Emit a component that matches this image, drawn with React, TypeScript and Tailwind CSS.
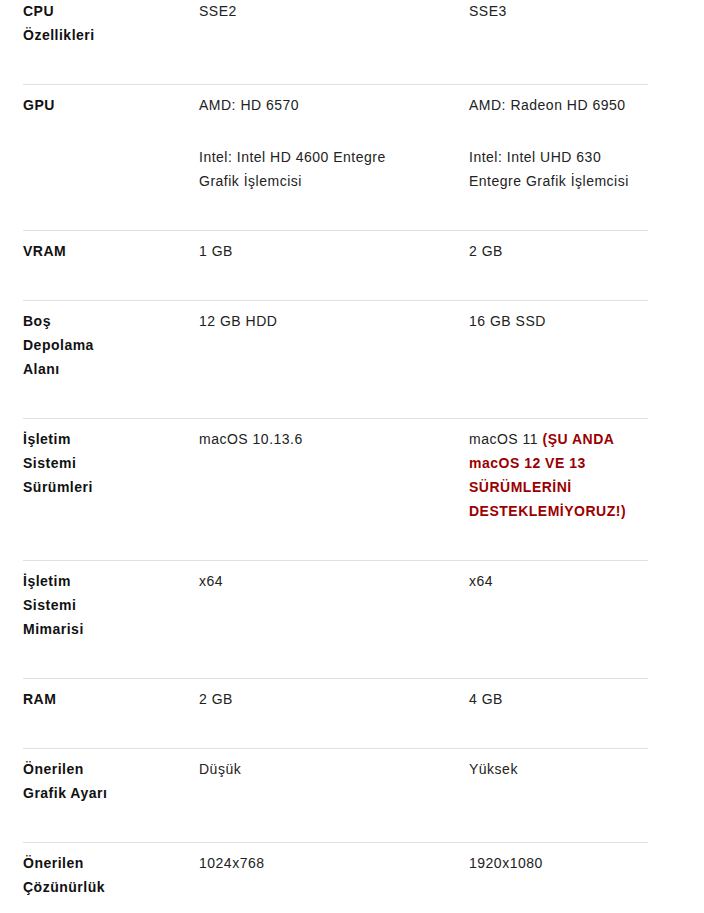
const RED = "font-bold text-[#9b0000]";

type Row = {
	label: string;
	low: React.ReactNode;
	high: React.ReactNode;
};

const rows: Row[] = [
	{ label: "CPU Özellikleri", low: <p>SSE2</p>, high: <p>SSE3</p> },
	{
		label: "GPU",
		low: (
			<>
				<p>AMD: HD 6570</p>
				<p className="mt-[28px]">Intel: Intel HD 4600 Entegre Grafik İşlemcisi</p>
			</>
		),
		high: (
			<>
				<p>AMD: Radeon HD 6950</p>
				<p className="mt-[28px]">Intel: Intel UHD 630 Entegre Grafik İşlemcisi</p>
			</>
		),
	},
	{ label: "VRAM", low: <p>1 GB</p>, high: <p>2 GB</p> },
	{ label: "Boş Depolama Alanı", low: <p>12 GB HDD</p>, high: <p>16 GB SSD</p> },
	{
		label: "İşletim Sistemi Sürümleri",
		low: <p>macOS 10.13.6</p>,
		high: (
			<p>
				macOS 11 <span className={RED}>(ŞU ANDA macOS 12 VE 13 SÜRÜMLERİNİ DESTEKLEMİYORUZ!)</span>
			</p>
		),
	},
	{ label: "İşletim Sistemi Mimarisi", low: <p>x64</p>, high: <p>x64</p> },
	{ label: "RAM", low: <p>2 GB</p>, high: <p>4 GB</p> },
	{ label: "Önerilen Grafik Ayarı", low: <p>Düşük</p>, high: <p>Yüksek</p> },
	{ label: "Önerilen Çözünürlük", low: <p>1024x768</p>, high: <p>1920x1080</p> },
];

const App = () => {
	return (
		<div className="min-h-dvh w-full bg-white overflow-hidden [font-family:'Liberation_Sans',Arial,sans-serif] text-[14px] leading-[24px] text-[#222] tracking-[0.5px]">
			<div className="ml-[23px] w-[625px] mt-[-10px]">
				{rows.map((row) => (
					<div
						key={row.label}
						className="grid grid-cols-[176px_270px_179px] border-t border-[#e1e1e1] pt-[8px] pb-[37px]"
					>
						<div className="w-[92px] font-bold text-[#111]">{row.label}</div>
						<div className="w-[215px]">{row.low}</div>
						<div className="w-[170px]">{row.high}</div>
					</div>
				))}
			</div>
		</div>
	);
};

export default App;
